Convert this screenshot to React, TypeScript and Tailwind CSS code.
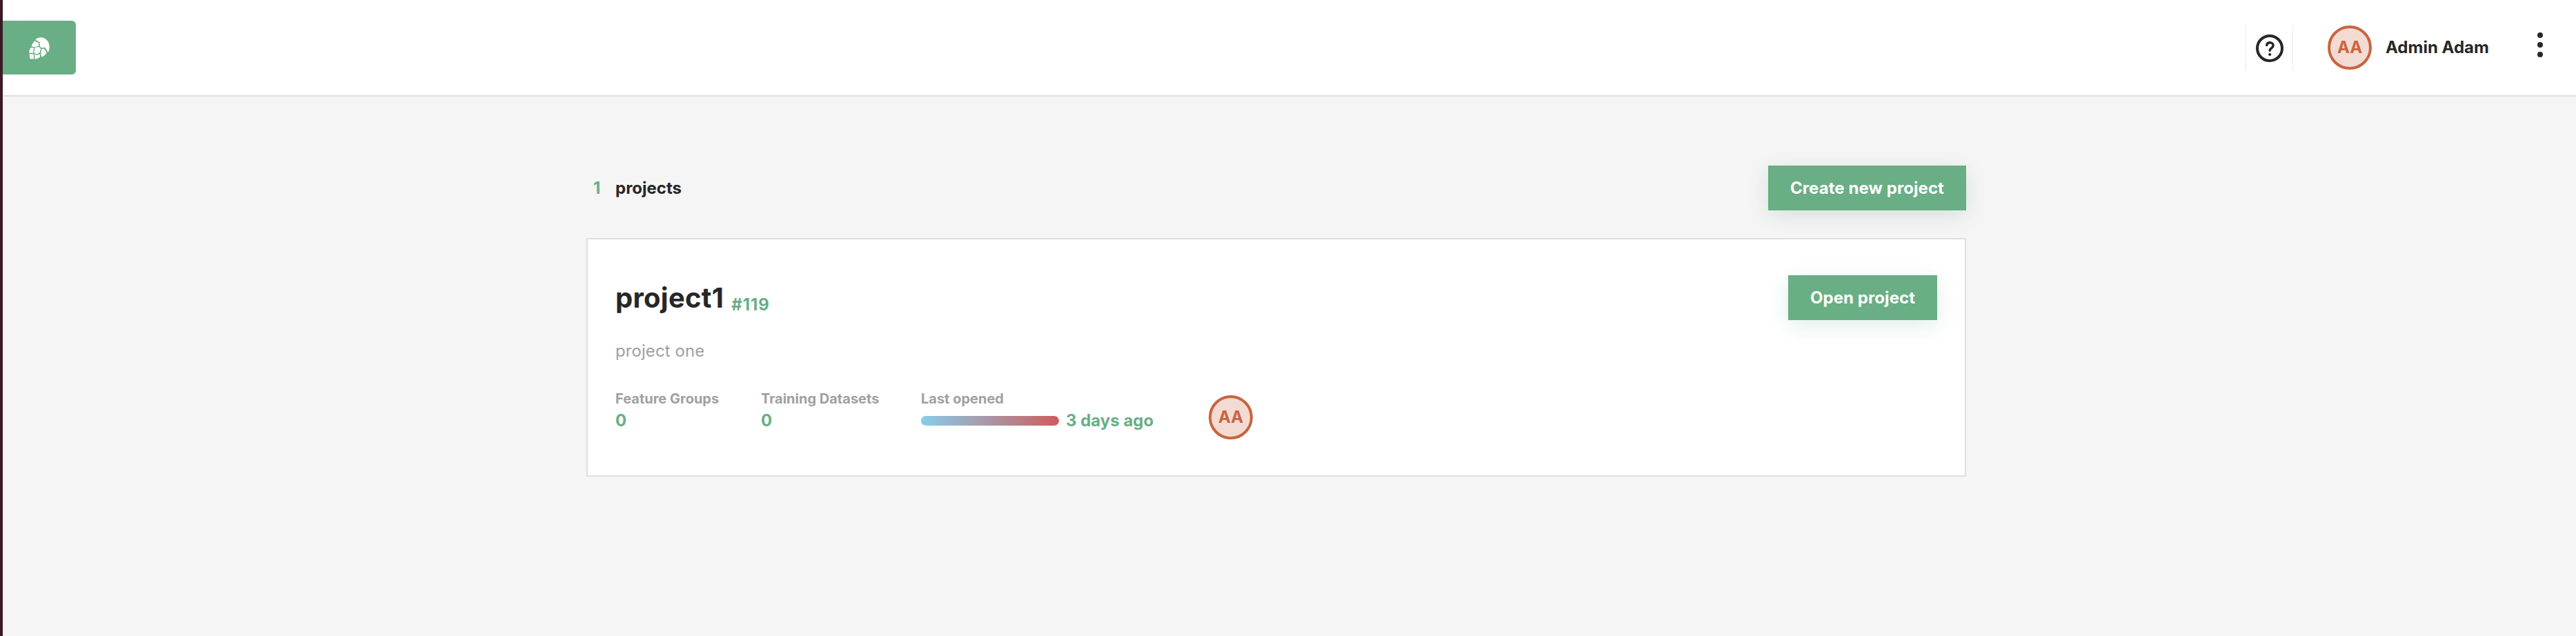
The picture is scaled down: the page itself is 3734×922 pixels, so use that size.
import React from "react";

function Avatar({ className }: { className: string }) {
  return (
    <div className={`flex size-16 shrink-0 items-center justify-center rounded-full border-4 border-[#c9643f] bg-[#f2dbd3] text-2xl font-bold text-[#c9643f] ${className}`}>
      AA
    </div>
  );
}

function Button({ className, children }: { className: string; children: React.ReactNode }) {
  return (
    <button className={`h-[65px] bg-[#69ae85] text-center text-2xl font-bold tracking-[0.07px] whitespace-nowrap text-white ${className}`}>
      {children}
    </button>
  );
}

function Logo() {
  return (
    <svg className="ml-[38px] mt-6 h-8 w-[30px]" viewBox="0 0 30 32" fill="#fff">
      <path d="M9.300 3.600C11.500 1.200 14 .2 17 .2c7 0 12.700 6 12.700 13.500 0 3-.7 6-2.100 8.400L23.500 15.100l-6.200 0-1.600-2L15.900 7.400z" />
      <path d="M8.300 5.200 14.500 8.600 14 12.300 9.700 14.300 3.700 13.400C4.300 10.300 5.800 7.300 8.300 5.200z" />
      <path d="M2.700 15 6.900 15.200 6.200 22.600.3 22.800C.2 20 1 17 2.700 15z" />
      <path d="M8.300 15.300 14.200 13.700 17 16.200 16.100 21.600 11.700 24.500 7.400 23z" />
      <path d="M18.400 17 21.900 16.500 25.600 22.600C24 25.500 21.500 27.600 18.500 28.700L17.200 24.700z" />
      <path d="M.6 24.200H6.500L7.200 31.300 1.800 31.600C.9 29.500.6 27 .6 24.200z" />
      <path d="M8 24.600 11.700 26 16 24.200 16 28.600C14 30.500 11.500 31.700 8.700 31.700z" />
    </svg>
  );
}

function Header() {
  return (
    <header className="flex h-[140px] items-start border-b-2 border-[#dfdfdf] bg-white">
      <div className="mt-[30px] h-[78px] w-[106px] rounded-r-[6px] bg-[#69ae85]">
        <Logo />
      </div>
      <div className="mt-9 ml-auto flex h-[66px] w-[70px] border-x-2 border-[#f4f4f4] pt-[14px] pl-[14px]">
        <svg className="size-10" viewBox="0 0 40 40" fill="none" stroke="#272727" strokeWidth="4" strokeLinecap="round">
          <circle cx="20" cy="20" r="18" />
          <path d="M15.700 15.500c.3-2.300 2-3.700 4.600-3.700 2.900 0 4.800 1.700 4.800 4.200 0 3.600-4.900 3.700-4.900 7.300" strokeWidth="3.500" />
          <circle cx="20.200" cy="29" r="2.100" fill="#272727" stroke="none" />
        </svg>
      </div>
      <Avatar className="mt-[37px] ml-[50px]" />
      <div className="mt-[51px] ml-5 w-[150px] text-2xl leading-9 font-bold whitespace-nowrap">Admin Adam</div>
      <svg className="mt-[47px] mr-12 ml-[70px] h-9 w-2" viewBox="0 0 8 36" fill="#272727">
        <circle cx="4" cy="4" r="4" />
        <circle cx="4" cy="18" r="4" />
        <circle cx="4" cy="32" r="4" />
      </svg>
    </header>
  );
}

function ProjectCard() {
  return (
    <section className="mt-10 flex h-[346px] items-start justify-between border-2 border-[#dfdfdf] bg-white px-10">
      <div>
        <div className="mt-[60px] flex items-baseline gap-[11px]">
          <h2 className="text-[40px] leading-[50px] font-bold tracking-[0.25px]">project1</h2>
          <span className="relative top-1 text-2xl font-bold tracking-[0.9px] text-[#69ae85]">#119</span>
        </div>
        <p className="mt-[34px] text-2xl leading-9 tracking-[0.08px] text-[#a0a0a0]">project one</p>
        <div className="mt-[39px] flex items-start text-xl leading-6 font-bold text-[#a0a0a0]">
          <div className="w-[211px]">
            <div>Feature Groups</div>
            <div className="mt-1 text-2xl leading-8 text-[#69ae85]">0</div>
          </div>
          <div className="w-[232px]">
            <div>Training Datasets</div>
            <div className="mt-1 text-2xl leading-8 text-[#69ae85]">0</div>
          </div>
          <div className="w-[417px]">
            <div>Last opened</div>
            <div className="mt-1 flex items-center gap-[10px]">
              <div className="h-[14px] w-[200px] rounded-full bg-linear-to-r/srgb from-[#87ceeb] to-[#cd5c5c]" />
              <div className="text-2xl leading-8 text-[#69ae85]">3 days ago</div>
            </div>
          </div>
          <Avatar className="mt-[7px]" />
        </div>
      </div>
      <div className="mt-[52px]">
        <Button className="w-[216px] shadow-[0_8px_30px_rgba(33,145,90,0.14)]">Open project</Button>
      </div>
    </section>
  );
}

export default function App() {
  return (
    <div className="h-[922px] overflow-hidden border-l-4 border-[#3b1a26] bg-[#f5f5f5] font-['Inter',sans-serif] text-[#272727]">
      <Header />
      <main className="ml-[846px] w-[2000px] pt-[100px]">
        <div className="flex h-[65px] items-center justify-between">
          <div className="flex pl-[10px] text-2xl font-bold">
            <span className="w-8 text-[#69ae85]">1</span>
            <span>projects</span>
          </div>
          <Button className="w-[287px] shadow-[0_8px_30px_rgba(33,110,70,0.14)]">Create new project</Button>
        </div>
        <ProjectCard />
      </main>
    </div>
  );
}
